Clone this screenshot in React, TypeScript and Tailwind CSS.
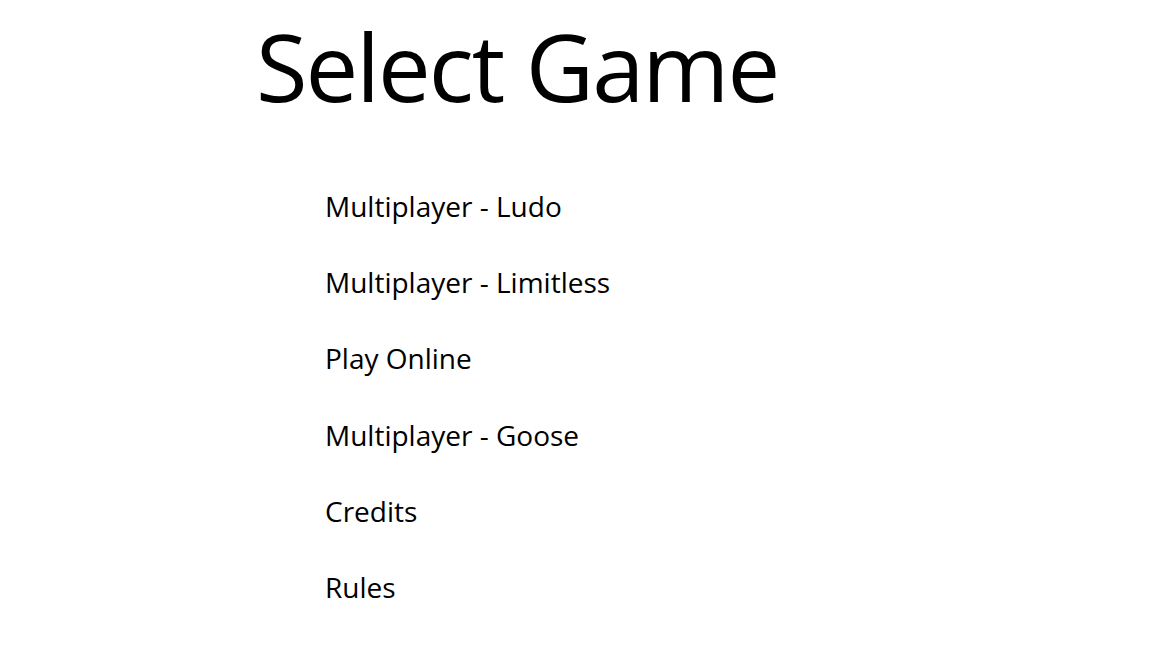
const items = [
  "Multiplayer - Ludo",
  "Multiplayer - Limitless",
  "Play Online",
  "Multiplayer - Goose",
  "Credits",
  "Rules",
];

export default function App() {
  return (
    <div className="min-h-[648px] w-full bg-white text-black font-['Open_Sans',sans-serif]">
      <h1 className="pl-[256px] pt-[6px] text-[94px] leading-[120px] font-normal tracking-[-2px]">Select Game</h1>
      <ul className="mt-[62px] pl-[325px]">
        {items.map((t) => (
          <li key={t} className="h-[76.2px] text-[28px] leading-[36px]">
            {t}
          </li>
        ))}
      </ul>
    </div>
  );
}
